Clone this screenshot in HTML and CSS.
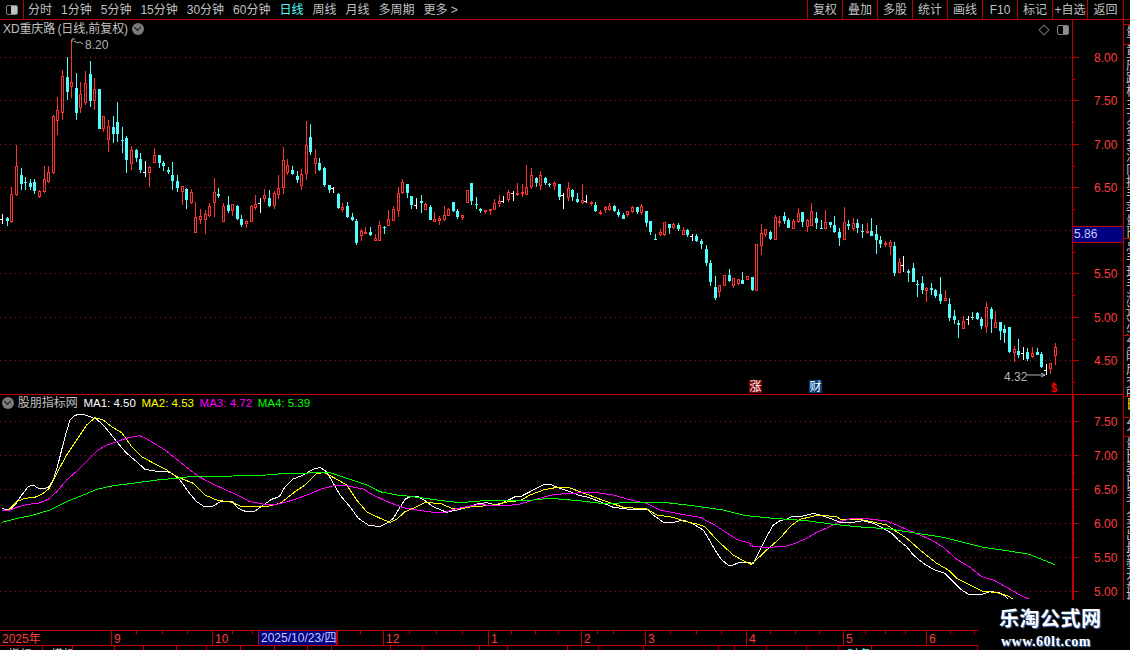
FILE: index.html
```html
<!DOCTYPE html>
<html lang="zh-CN">
<head>
    <meta charset="UTF-8">
    <title>XD重庆路 日线</title>
    <link rel="stylesheet" href="styles.css">
</head>
<body>
    <div class="toolbar">
        <div class="layout-btn"><span class="panel-icon"></span></div>
        <div class="periods">
            <span>分时</span><span>1分钟</span><span>5分钟</span><span>15分钟</span><span>30分钟</span><span>60分钟</span>
            <span class="active">日线</span><span>周线</span><span>月线</span><span>多周期</span><span>更多 &gt;</span>
        </div>
        <div class="actions">
            <span>复权</span><span>叠加</span><span>多股</span><span>统计</span><span>画线</span><span>F10</span><span>标记</span><span>+自选</span><span>返回</span>
        </div>
        <div class="toolbar-end"></div>
    </div>

    <div class="workspace">
        <div class="charts">
            <div class="pane price-pane">
                <svg id="price-chart" width="1123" height="374" viewBox="0 20 1123 374">
                    <path class="note-line" d="M72 39v3M72 39h3M74 41l4 2 2-1 3 2"/>
                    <text class="note" x="85" y="45">8.20</text>
                    <text class="note" x="1004" y="377">4.32</text>
                    <path class="note-line" d="M1027 375h18M1041 373l4 2-4 2"/>
                    <rect class="badge-up" x="749" y="380" width="13" height="13"/>
                    <text class="badge-text" x="755.5" y="387">涨</text>
                    <rect class="badge-news" x="809" y="380" width="13" height="13"/>
                    <text class="badge-text" x="815.5" y="387">财</text>
                    <path class="sign-mark" d="M1054 382l-2 2h4z"/>
                    <text class="sign-text" x="1054" y="388">$</text>
                </svg>
                <div class="pane-title">
                    <span class="stock-name">XD重庆路 (日线,前复权)</span>
                    <span class="round-btn"></span>
                </div>
                <div class="pane-tools">
                    <span class="diamond"></span>
                    <span class="panel-icon small"></span>
                </div>
                <div class="last-price">5.86</div>
            </div>

            <div class="pane indicator-pane">
                <svg id="ma-chart" width="1123" height="235" viewBox="0 395 1123 235"></svg>
                <div class="legend">
                    <span class="round-btn"></span>
                    <span class="legend-name">股朋指标网</span>
                    <span class="ma1">MA1: 4.50</span>
                    <span class="ma2">MA2: 4.53</span>
                    <span class="ma3">MA3: 4.72</span>
                    <span class="ma4">MA4: 5.39</span>
                </div>
            </div>

            <div class="date-bar" id="date-bar"></div>
            <div class="tab-bar" id="tab-bar"></div>
        </div>

        <div class="side-strip">
            <div class="side-cell s1"></div>
            <div class="side-cell s2">量</div>
            <div class="side-cell s3">重庆路桥主力资金流向换手率量比振幅均价外盘内盘</div>
            <div class="side-cell s4">总手现手涨速净流入金额市盈率</div>
            <div class="side-cell s5">分时成交明细</div>
            <div class="side-cell s6">日</div>
            <div class="side-cell s7">分</div>
            <div class="side-cell s8">量比委比买入卖出最新开盘最高最低昨收均价涨幅</div>
        </div>
    </div>

    <div class="watermark">
        <div class="wm-title">乐淘公式网</div>
        <div class="wm-url">www.60lt.com</div>
    </div>

    <script src="chart.js"></script>
</body>
</html>
```

FILE: styles.css
```css
* {
    box-sizing: border-box;
}
html, body {
    margin: 0;
    height: 100%;
}
body {
    width: 1130px;
    height: 650px;
    overflow: hidden;
    position: relative;
    background-color: #000;
    color: #c0c0c0;
    font-family: "Liberation Sans", "Noto Sans CJK SC", sans-serif;
    font-size: 12px;
    line-height: 14px;
}

/* top bar */
.toolbar {
    display: flex;
    height: 20px;
    border-bottom: 1px solid #c00000;
    white-space: nowrap;
}
.layout-btn {
    width: 24px;
    display: flex;
    align-items: center;
    justify-content: center;
    border-right: 1px solid #c00000;
}
.panel-icon {
    display: block;
    width: 12px;
    height: 10px;
    border: 1px solid #808080;
    border-radius: 2px;
    background: linear-gradient(to right, #000 45%, #c0c0c0 45%);
}
.periods {
    display: flex;
    gap: 9px;
    padding: 3px 0 0 4px;
}
.periods .active {
    color: #54fcfc;
}
.actions {
    display: flex;
    margin-left: auto;
}
.actions span {
    width: 35px;
    padding-top: 3px;
    text-align: center;
    border-left: 1px solid #c00000;
}
.actions span:last-child {
    width: 36px;
}
.toolbar-end {
    width: 7px;
    border-left: 1px solid #c00000;
}

.workspace {
    display: flex;
}
.charts {
    width: 1123px;
}
.pane {
    position: relative;
}
.pane svg {
    display: block;
}
.price-pane {
    height: 374px;
}
.indicator-pane {
    height: 236px;
    border-top: 1px solid #c00000;
}

.pane-title {
    position: absolute;
    left: 3px;
    top: 2px;
    display: flex;
    align-items: center;
    gap: 4px;
}
.stock-name {
    word-spacing: -1px;
    letter-spacing: -0.1px;
}
.round-btn {
    position: relative;
    display: block;
    width: 12px;
    height: 12px;
    border-radius: 50%;
    background-color: #7a7a7a;
}
.round-btn::after {
    content: "";
    position: absolute;
    left: 3px;
    top: 2px;
    width: 4px;
    height: 4px;
    border-right: 1px solid #111;
    border-bottom: 1px solid #111;
    transform: rotate(45deg);
}
.pane-tools {
    position: absolute;
    left: 1040px;
    top: 5px;
    display: flex;
    align-items: center;
    gap: 9px;
}
.diamond {
    display: block;
    width: 8px;
    height: 8px;
    border: 1px solid #707070;
    transform: rotate(45deg);
}
.panel-icon.small {
    background: linear-gradient(to right, #000 50%, #909090 50%);
}
.last-price {
    position: absolute;
    left: 1073px;
    top: 206px;
    width: 50px;
    height: 17px;
    padding-left: 1px;
    background-color: #000080;
    border-top: 1px solid #c00000;
    border-bottom: 1px solid #c00000;
    color: #c8c8ff;
    line-height: 15px;
}

.legend {
    position: absolute;
    left: 2px;
    top: 1px;
    display: flex;
    align-items: center;
    font-size: 11.5px;
    gap: 5.7px;
}
.legend-name {
    margin-left: -2px;
    font-size: 12px;
}
.ma1 { color: #fff; }
.ma2 { color: #ffff00; }
.ma3 { color: #ff00ff; }
.ma4 { color: #00ff00; }

/* chart drawing */
.grid {
    stroke: #a01818;
    stroke-dasharray: 1 4;
}
.axis {
    stroke: #c00000;
    fill: none;
}
.axis-thick {
    stroke: #c00000;
    stroke-width: 2;
}
.axis-label {
    fill: #ff3c3c;
    font-size: 12px;
    dominant-baseline: central;
}
.wick-r { stroke: #ff3232; }
.wick-c { stroke: #54fcfc; }
.wick-w { stroke: #fff; }
.body-r {
    fill: #000;
    stroke: #ff3232;
}
.body-c { fill: #54fcfc; }
.ma-line {
    fill: none;
    stroke-width: 1;
    shape-rendering: crispEdges;
}
.line-1 { stroke: #fff; }
.line-2 { stroke: #ffff00; }
.line-3 { stroke: #ff00ff; }
.line-4 { stroke: #00ff00; }

.note {
    fill: #b4b4b4;
    font-size: 12px;
    dominant-baseline: central;
}
.note-line {
    fill: none;
    stroke: #b4b4b4;
}
.badge-up { fill: #800000; }
.badge-news { fill: #004080; }
.badge-text {
    fill: #fff;
    font-size: 12px;
    text-anchor: middle;
    dominant-baseline: central;
}
.sign-mark { fill: #ff0000; }
.sign-text {
    fill: #ff0000;
    font-size: 11px;
    font-weight: bold;
    text-anchor: middle;
    dominant-baseline: central;
}

/* date axis and tabs */
.date-bar {
    position: relative;
    display: flex;
    width: 978px;
    height: 16px;
    border-top: 1px solid #c00000;
    border-bottom: 1px solid #c00000;
    color: #ff3c3c;
}
.date-cell {
    padding: 1px 0 0 2px;
    border-left: 1px solid #c00000;
    line-height: 14px;
    white-space: nowrap;
}
.date-cell:first-child {
    border-left: none;
}
.date-cell.current {
    padding-top: 0;
    background-color: #000080;
    color: #c8c8ff;
    border-right: 1px solid #c00000;
}
.date-tick {
    position: absolute;
    top: 0;
    width: 1px;
    height: 3px;
    background-color: #c00000;
}
.tab-bar {
    display: flex;
    width: 978px;
    height: 4px;
    overflow: hidden;
}
.tab-cell {
    padding: 2px 0 0 8px;
    border-right: 1px solid #c00000;
    white-space: nowrap;
    overflow: hidden;
}
.tab-cell.on {
    color: #54fcfc;
}

/* cut-off list on the right edge */
.side-strip {
    width: 7px;
    height: 630px;
    border-left: 1px solid #c00000;
    overflow: hidden;
    display: flex;
    flex-direction: column;
}
.side-cell {
    width: 14px;
    padding-left: 1px;
    border-bottom: 1px solid #c00000;
    font-size: 13px;
    line-height: 13px;
    writing-mode: vertical-rl;
    text-orientation: upright;
    overflow: hidden;
    white-space: nowrap;
}
.s1 { height: 5px; }
.s2 { height: 20px; }
.s3 { height: 194px; }
.s4 { height: 97px; }
.s5 { height: 61px; }
.s6 { height: 21px; color: #ffff00; }
.s7 { height: 19px; }
.s8 { height: 163px; border-bottom: none; }

.watermark {
    position: absolute;
    left: 978px;
    top: 600px;
    width: 152px;
    height: 50px;
    background-color: #000;
    color: #fff;
}
.wm-title {
    margin: 7px 0 0 21px;
    font-size: 20px;
    font-weight: bold;
    line-height: 24px;
    letter-spacing: 0.5px;
    text-shadow: 1px 1px 1px #3f6fb0;
}
.wm-url {
    margin: 4px 0 0 23px;
    font-family: "Liberation Serif", serif;
    font-size: 14px;
    font-weight: bold;
    line-height: 14px;
    letter-spacing: 0.5px;
    text-shadow: 1px 1px 1px #3f6fb0;
}
```

FILE: chart.js
```js
// day bars in page pixels: high, body top, body bottom, low, kind (r up, c down, w flat)
const bars = [
    [214,219,219,224,'w'],[217,218,221,226,'c'],[187,194,222,223,'r'],[145,166,195,196,'r'],[168,175,184,190,'c'],
    [177,182,183,190,'c'],[179,183,187,190,'c'],[179,182,191,194,'c'],[190,191,197,198,'r'],[166,179,192,193,'r'],
    [166,172,182,183,'r'],[115,116,173,174,'r'],[97,110,121,135,'r'],[70,76,113,120,'r'],[57,77,92,100,'c'],
    [40,82,87,98,'r'],[73,88,113,120,'c'],[82,94,108,113,'r'],[71,83,103,105,'r'],[61,74,101,107,'c'],
    [78,89,101,110,'r'],[89,89,129,129,'c'],[116,116,129,132,'r'],[120,126,140,152,'r'],[116,127,134,143,'c'],
    [102,122,134,142,'c'],[127,140,141,153,'c'],[136,138,160,173,'c'],[146,150,164,170,'r'],[149,150,158,162,'c'],
    [153,159,170,173,'c'],[161,172,172,177,'w'],[166,167,173,187,'r'],[148,155,163,163,'r'],[155,155,163,168,'c'],
    [161,163,166,171,'c'],[167,170,172,174,'c'],[162,175,181,190,'c'],[175,181,188,192,'c'],[186,186,192,205,'r'],
    [188,189,200,209,'c'],[189,192,203,204,'r'],[202,217,233,233,'r'],[209,216,220,224,'r'],[210,214,220,234,'r'],
    [203,206,216,217,'r'],[178,192,203,217,'r'],[188,194,196,198,'c'],[203,206,222,222,'r'],[196,205,211,213,'c'],
    [204,204,211,216,'r'],[205,206,219,220,'c'],[215,219,225,227,'c'],[220,221,224,228,'r'],[205,206,222,222,'r'],
    [195,204,208,210,'r'],[198,203,203,213,'w'],[189,195,199,202,'r'],[190,198,206,207,'c'],[191,193,206,209,'r'],
    [175,188,195,199,'r'],[147,160,188,194,'r'],[159,165,173,175,'r'],[166,170,174,175,'c'],[171,176,180,183,'c'],
    [169,174,186,190,'r'],[121,145,174,180,'r'],[124,137,152,155,'c'],[149,158,164,174,'r'],[158,163,170,171,'c'],
    [167,168,185,187,'c'],[185,185,190,193,'c'],[187,188,188,193,'w'],[193,194,208,209,'c'],[203,207,210,212,'r'],
    [202,206,217,218,'c'],[213,217,220,221,'c'],[219,221,243,245,'c'],[229,231,236,241,'r'],[227,232,234,234,'r'],
    [227,232,235,236,'c'],[234,238,241,241,'r'],[221,225,241,241,'r'],[226,227,228,234,'c'],[210,219,226,226,'r'],
    [206,209,221,221,'r'],[187,193,211,217,'r'],[179,182,193,194,'r'],[184,184,193,198,'c'],[196,196,205,209,'c'],
    [198,205,205,209,'w'],[195,201,203,213,'c'],[203,204,210,210,'r'],[205,207,220,220,'c'],[212,219,222,222,'r'],
    [216,218,221,225,'r'],[206,215,220,221,'r'],[208,209,216,216,'r'],[202,202,211,212,'c'],[209,211,217,219,'c'],
    [215,215,218,220,'r'],[190,190,203,203,'r'],[183,183,201,205,'c'],[197,204,205,209,'c'],[208,209,211,213,'c'],
    [210,210,212,214,'r'],[209,209,211,215,'r'],[199,203,210,210,'r'],[195,201,204,207,'r'],[196,201,201,203,'w'],
    [190,192,200,202,'r'],[191,193,193,201,'w'],[183,193,195,196,'r'],[184,192,194,197,'r'],[165,187,195,195,'r'],
    [168,175,187,189,'r'],[177,178,183,187,'c'],[171,175,186,190,'r'],[177,178,183,185,'c'],[183,184,185,187,'c'],
    [181,183,186,190,'r'],[184,184,197,200,'c'],[193,195,195,209,'w'],[182,188,198,201,'r'],[189,190,197,201,'c'],
    [193,199,202,203,'c'],[184,200,203,204,'r'],[195,201,201,203,'w'],[201,202,204,206,'r'],[202,205,211,212,'c'],
    [210,212,214,215,'r'],[206,207,210,213,'r'],[203,206,210,211,'r'],[205,206,211,212,'c'],[209,212,215,217,'c'],
    [213,215,219,219,'c'],[211,211,215,217,'r'],[206,207,212,213,'r'],[207,207,212,214,'c'],[204,206,213,215,'r'],
    [211,211,223,227,'c'],[221,221,232,235,'c'],[234,239,240,240,'c'],[229,232,235,236,'r'],[222,222,235,236,'r'],
    [224,224,228,234,'c'],[223,224,228,229,'r'],[223,225,229,231,'c'],[227,230,235,235,'r'],[229,230,235,237,'c'],
    [234,236,236,241,'w'],[234,236,241,242,'c'],[239,241,244,249,'c'],[245,249,263,266,'c'],[260,263,282,286,'c'],
    [276,287,298,300,'c'],[285,285,292,297,'r'],[275,275,286,286,'r'],[269,275,281,282,'c'],[278,278,286,288,'r'],
    [279,279,284,285,'r'],[272,280,284,284,'c'],[276,276,280,280,'r'],[277,277,290,291,'c'],[244,244,291,291,'r'],
    [224,233,246,255,'r'],[229,229,235,237,'r'],[231,232,239,240,'c'],[215,217,240,240,'r'],[216,221,222,227,'r'],
    [212,216,221,224,'c'],[218,220,228,228,'c'],[219,221,229,229,'r'],[208,213,222,223,'r'],[212,212,222,227,'c'],
    [219,220,227,232,'r'],[203,211,226,226,'r'],[212,218,223,229,'c'],[220,228,229,229,'c'],[210,222,229,229,'r'],
    [222,222,225,228,'c'],[216,225,232,233,'c'],[228,232,238,246,'c'],[207,222,240,240,'r'],[220,224,226,230,'c'],
    [218,223,229,231,'r'],[219,223,228,233,'c'],[224,231,232,238,'c'],[223,231,233,234,'r'],[218,231,236,236,'c'],
    [225,234,240,254,'c'],[236,240,244,248,'c'],[241,243,245,247,'r'],[240,242,247,255,'r'],[242,246,273,276,'c'],
    [258,262,273,273,'r'],[256,265,265,272,'w'],[269,271,273,282,'c'],[263,268,282,282,'c'],[280,284,285,297,'c'],
    [276,283,290,294,'c'],[287,288,291,302,'r'],[283,288,290,295,'c'],[289,290,296,298,'c'],[277,294,301,304,'c'],
    [290,298,301,301,'r'],[298,304,318,321,'c'],[310,316,320,324,'c'],[320,323,325,338,'c'],[316,321,329,329,'r'],
    [316,319,319,325,'w'],[312,317,318,320,'c'],[312,313,319,320,'c'],[317,319,326,329,'c'],[302,307,327,333,'r'],
    [307,309,319,333,'c'],[311,322,328,328,'r'],[322,322,331,340,'c'],[325,329,333,343,'c'],[327,327,352,353,'c'],
    [346,349,353,362,'r'],[339,351,355,358,'c'],[347,353,353,360,'w'],[348,352,359,361,'c'],[347,353,357,358,'r'],
    [348,352,355,355,'c'],[352,354,367,368,'c'],[364,370,370,375,'w'],[363,363,369,374,'r'],[343,347,356,365,'r']
];

// indicator lines traced from 3x views: view origin, then x,y pairs
const lines = {
    'line-1': [
        [0,390,[5,356,20,358,30,360,45,345,65,315,85,290,100,285,118,297,145,293,160,270,175,220,195,140,210,90,225,76,245,72,265,78,290,88,310,105,330,130,350,155,380,190,410,215,435,238,465,243,495,243,515,250,540,270,565,305,590,335,610,348,640,348,665,333,695,333,715,355,740,366,765,363,790,345,815,328,838,320,855,290,880,267,910,255,940,238,960,232,980,245,1000,280,1020,315,1050,350,1075,385,1105,405,1140,410]],
        [380,460,[20,190,40,175,55,150,75,118,90,110,115,110,135,122,160,140,200,157,230,150,260,143,290,132,320,128,340,133,360,132,390,118,405,110,425,108,450,95,490,75,510,73,540,85,570,95,600,107,625,112,660,125,700,142,740,147,800,147,820,165,850,187,880,187,910,180,940,192,970,210,985,235,1005,270,1025,300,1045,315,1060,315,1075,308,1110,308]],
        [750,490,[0,222,10,220,30,180,50,140,70,105,90,92,110,88,125,80,160,78,190,70,210,75,240,85,270,97,300,98,340,92,370,100,400,115,425,130,445,150,470,170,490,195,520,220,550,238,585,250,610,275,635,300,655,312,700,312,720,305,745,307,765,318,775,328]]
    ],
    'line-2': [
        [0,390,[5,360,25,360,50,335,75,325,105,322,130,310,148,295,170,250,200,195,230,150,260,105,285,83,310,90,335,110,365,128,395,170,425,200,465,222,500,240,530,260,580,280,615,315,650,330,695,337,725,350,760,350,800,350,840,340,860,325,885,305,915,285,950,250,975,248,1010,268,1040,285,1070,330,1100,365,1140,385]],
        [380,460,[30,187,50,178,75,155,100,145,135,128,180,130,215,145,250,147,260,142,320,137,350,133,385,125,420,122,450,105,490,90,525,83,565,82,600,95,640,110,680,125,730,142,800,147,830,165,880,172,910,183,950,192,975,200,1010,240,1060,285,1095,305,1115,313]],
        [750,490,[0,222,10,218,50,180,90,145,120,110,150,88,205,75,260,80,270,87,340,90,410,105,440,125,470,145,510,180,560,220,595,240,620,265,660,285,695,303,740,308,775,318,790,328]]
    ],
    'line-3': [
        [0,390,[5,362,25,362,55,350,85,343,115,340,145,328,170,305,200,270,240,235,270,205,295,180,320,165,350,155,385,143,420,137,440,147,495,180,530,208,570,240,600,262,650,287,700,310,750,335,790,342,835,342,880,330,935,310,960,298,1000,288,1040,287,1090,297,1120,315,1140,325]],
        [380,460,[30,128,70,143,110,150,160,157,195,157,225,147,260,140,300,133,340,138,390,136,420,132,460,120,515,105,570,100,640,97,700,105,760,122,800,130,840,150,900,162,960,172,1000,192,1030,212,1070,238,1110,250]],
        [750,490,[0,167,40,172,105,170,130,162,170,145,200,127,240,110,270,95,300,87,350,86,410,93,440,105,490,127,545,150,580,172,620,208,660,232,695,260,735,272,775,295,810,315,838,328]]
    ],
    'line-4': [
        [0,390,[5,397,40,388,100,375,150,360,200,335,250,315,290,298,340,287,400,280,470,270,530,265,570,260,700,258,800,255,860,250,990,248,1050,268,1100,285,1140,305]],
        [380,460,[50,105,100,110,170,120,240,128,300,123,400,122,460,120,510,115,600,122,660,130,780,128,860,128,940,137,1030,150,1090,165]],
        [750,490,[0,78,70,85,170,92,250,103,320,110,420,117,500,130,580,142,640,157,700,172,770,182,835,192,880,210,915,224]]
    ]
};

function axisMarks(rows, top, bottom, step, thick) {
    let out = '';
    rows.forEach(function (row) {
        out += '<line class="grid" x1="0" x2="1072" y1="' + (row[1] + 0.5) + '" y2="' + (row[1] + 0.5) + '"/>';
        out += '<line class="axis" x1="1073" x2="1079" y1="' + (row[1] + 0.5) + '" y2="' + (row[1] + 0.5) + '"/>';
        out += '<line class="axis" x1="1073" x2="1075" y1="' + (row[1] + step + 0.5) + '" y2="' + (row[1] + step + 0.5) + '"/>';
        if (row[0]) {
            out += '<text class="axis-label" x="1094" y="' + (row[1] + 1) + '">' + row[0] + '</text>';
        }
    });
    if (thick) {
        out += '<line class="axis-thick" x1="1073" x2="1073" y1="' + top + '" y2="' + bottom + '"/>';
    } else {
        out += '<line class="axis" x1="1072.5" x2="1072.5" y1="' + top + '" y2="' + bottom + '"/>';
    }
    return out;
}

function drawBar(bar, i) {
    const x = Math.round(2.3 + i * 4.597);
    const kind = bar[4];
    let out = '<line class="wick-' + kind + '" x1="' + (x + 0.5) + '" x2="' + (x + 0.5) + '" y1="' + bar[0] + '" y2="' + bar[3] + '"/>';
    if (kind === 'r') {
        out += '<rect class="body-r" x="' + (x - 0.5) + '" y="' + (bar[1] + 0.5) + '" width="2" height="' + Math.max(bar[2] - bar[1] - 1, 1) + '"/>';
    } else if (kind === 'c') {
        out += '<rect class="body-c" x="' + (x - 1) + '" y="' + bar[1] + '" width="3" height="' + Math.max(bar[2] - bar[1], 1) + '"/>';
    } else {
        out += '<line class="wick-w" x1="' + (x - 2) + '" x2="' + x + '" y1="' + (bar[1] + 0.5) + '" y2="' + (bar[1] + 0.5) + '"/>';
    }
    return out;
}

function drawLine(name) {
    let pts = [];
    lines[name].forEach(function (part) {
        for (let i = 0; i < part[2].length; i += 2) {
            pts.push((part[0] + part[2][i] / 3).toFixed(1) + ',' + (part[1] + part[2][i + 1] / 3).toFixed(1));
        }
    });
    return '<polyline class="ma-line ' + name + '" points="' + pts.join(' ') + '"/>';
}

// the 6.00 label sits under the last price box, so it has no text
const priceRows = [['8.00',57],['7.50',100],['7.00',144],['6.50',187],['',230],['5.50',273],['5.00',317],['4.50',360]];
const maRows = [['7.50',421],['7.00',455],['6.50',489],['6.00',523],['5.50',557],['5.00',591]];

const priceSvg = document.getElementById('price-chart');
priceSvg.insertAdjacentHTML('afterbegin',
    axisMarks(priceRows, 20, 394, 22, false) +
    '<g shape-rendering="crispEdges">' + bars.map(drawBar).join('') + '</g>');

const maSvg = document.getElementById('ma-chart');
maSvg.innerHTML = axisMarks(maRows, 395, 630, 17, true) + Object.keys(lines).map(drawLine).join('');

// bottom axis: label, left edge, right edge
const dateCells = [
    ['2025年',0,111],['9',111,212],['10',212,258],['2025/10/23/四',258,337,'current'],['',337,383],['12',383,488],
    ['1',488,581],['2',581,645],['3',645,746],['4',746,843],['5',843,926],['6',926,978]
];
const dateTicks = [136,162,187,232,252,360,409,436,462,511,535,558,597,613,670,696,721,770,795,819,865,885,905,950,974];
const dateBar = document.getElementById('date-bar');
dateCells.forEach(function (c) {
    const cell = document.createElement('div');
    cell.className = 'date-cell ' + (c[3] || '');
    cell.style.width = (c[2] - c[1]) + 'px';
    cell.textContent = c[0];
    dateBar.appendChild(cell);
});
dateTicks.forEach(function (x) {
    const tick = document.createElement('span');
    tick.className = 'date-tick';
    tick.style.left = x + 'px';
    dateBar.appendChild(tick);
});

// tab strip below the date axis, mostly cut off by the window
const tabEdges = [43,73,115,144,177,207,241,275,308,332,391,423,480,508,568,599,644,719,735,767,807,839,872,978];
const tabNames = {0: '指标A', 1: '模板', 22: '财务'};
const tabBar = document.getElementById('tab-bar');
tabEdges.forEach(function (edge, i) {
    const cell = document.createElement('div');
    cell.className = 'tab-cell' + (i === 22 ? ' on' : '');
    cell.style.width = (edge - (i ? tabEdges[i - 1] : 0)) + 'px';
    cell.textContent = tabNames[i] || '';
    tabBar.appendChild(cell);
});
```
